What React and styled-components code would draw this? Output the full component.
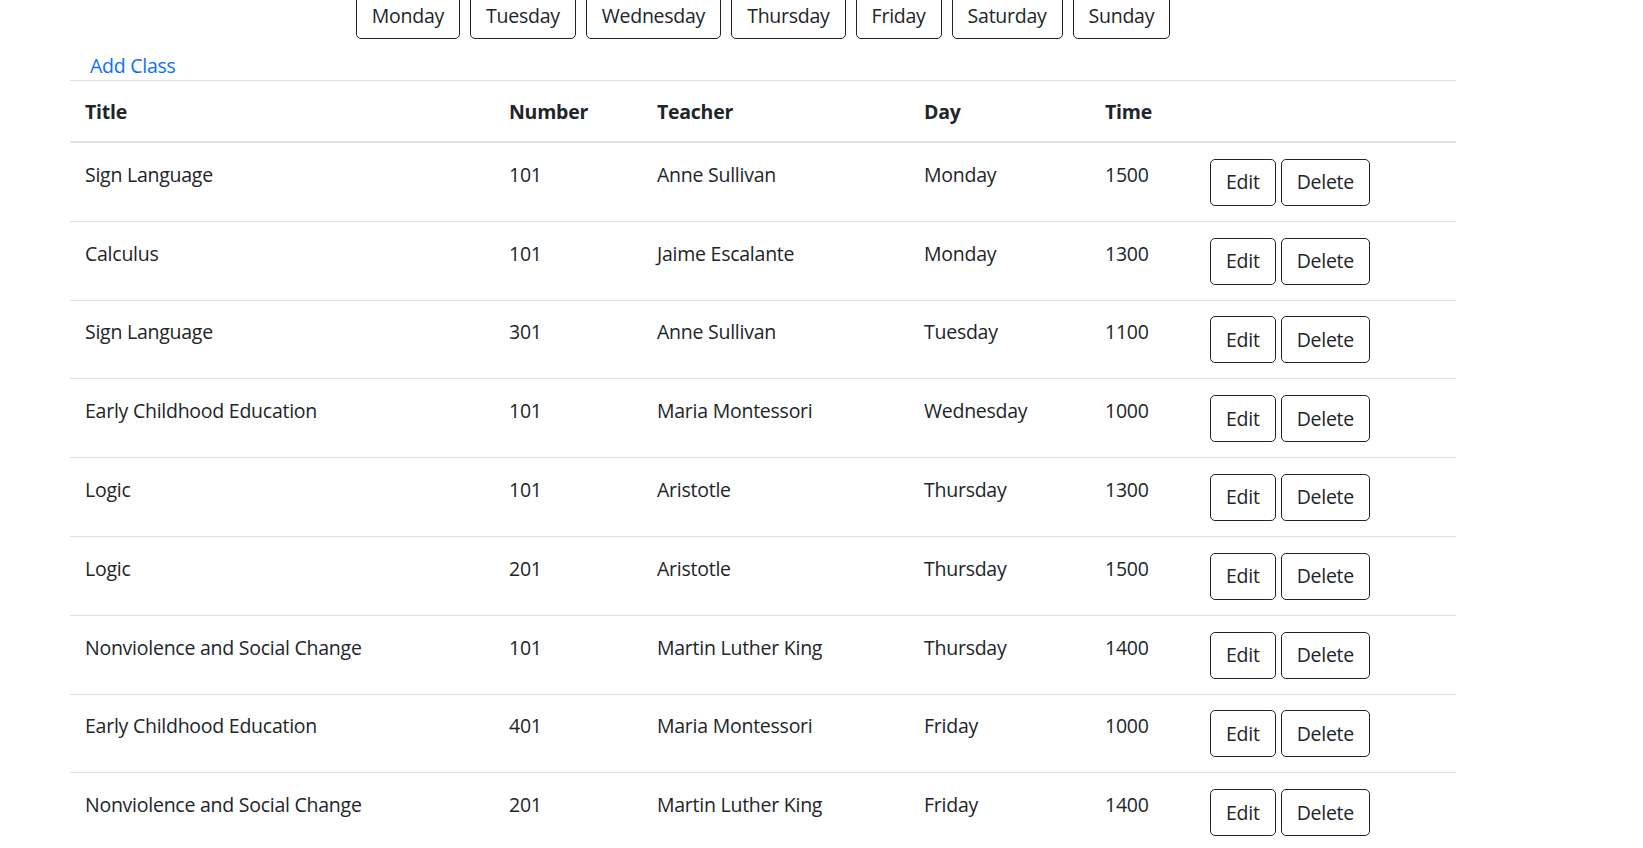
import React from "react";
import styled, { createGlobalStyle } from "styled-components";

const GlobalStyle = createGlobalStyle`
  html {
    font-size: 20px;
    overflow: hidden;
  }
  body {
    margin: 0;
    font-family: "Open Sans", "Noto Sans", sans-serif;
    font-size: 19.5px;
    letter-spacing: -0.25px;
    line-height: 30px;
    color: #212529;
    background: #fff;
    overflow: hidden;
  }
`;

const Container = styled.div`
  width: 1386px;
  margin-left: 70px;
`;

const DayBar = styled.div`
  display: flex;
  justify-content: center;
  gap: 10px;
  margin-top: -8px;
  margin-bottom: 11px;
`;

const Button = styled.button`
  display: inline-block;
  font-family: inherit;
  font-size: 19.5px;
  letter-spacing: -0.25px;
  line-height: 30px;
  color: #212529;
  background: transparent;
  border: 1px solid #212529;
  border-radius: 5px;
  padding: 7.5px 15px;
  cursor: pointer;
`;

const AddLink = styled.a`
  display: block;
  padding-left: 20px;
  padding-top: 1px;
  height: 29px;
  color: #0d6efd;
  text-decoration: none;
`;

const Table = styled.table`
  width: 100%;
  border-collapse: collapse;
  table-layout: fixed;
  border-top: 1px solid #dee2e6;
`;

const HeadRow = styled.tr`
  border-bottom: 2px solid #dee2e6;
`;

const Th = styled.th`
  box-sizing: border-box;
  width: ${props => props.w}px;
  text-align: left;
  font-weight: 700;
  padding: 16px 15px 14px;
  vertical-align: top;
`;

const Row = styled.tr`
  border-bottom: 1px solid #dee2e6;
`;

const Td = styled.td`
  padding: 16.8px 15px 14px;
  vertical-align: top;
  white-space: nowrap;
`;

const ActionCell = styled.td`
  padding: 15.8px 15px 15px;
  vertical-align: top;
`;

const Actions = styled.div`
  display: flex;
  gap: 5px;
`;

const days = [
  "Monday",
  "Tuesday",
  "Wednesday",
  "Thursday",
  "Friday",
  "Saturday",
  "Sunday"
];

const columns = [
  { label: "Title", w: 424 },
  { label: "Number", w: 148 },
  { label: "Teacher", w: 267 },
  { label: "Day", w: 181 },
  { label: "Time", w: 105 },
  { label: "", w: 261 }
];

const classes = [
  ["Sign Language", "101", "Anne Sullivan", "Monday", "1500"],
  ["Calculus", "101", "Jaime Escalante", "Monday", "1300"],
  ["Sign Language", "301", "Anne Sullivan", "Tuesday", "1100"],
  ["Early Childhood Education", "101", "Maria Montessori", "Wednesday", "1000"],
  ["Logic", "101", "Aristotle", "Thursday", "1300"],
  ["Logic", "201", "Aristotle", "Thursday", "1500"],
  ["Nonviolence and Social Change", "101", "Martin Luther King", "Thursday", "1400"],
  ["Early Childhood Education", "401", "Maria Montessori", "Friday", "1000"],
  ["Nonviolence and Social Change", "201", "Martin Luther King", "Friday", "1400"]
];

const App = () => (
  <>
    <GlobalStyle />
    <Container>
      <DayBar>
        {days.map(day => (
          <Button key={day}>{day}</Button>
        ))}
      </DayBar>
      <AddLink href="#">Add Class</AddLink>
      <Table>
        <thead>
          <HeadRow>
            {columns.map((col, i) => (
              <Th key={i} w={col.w}>
                {col.label}
              </Th>
            ))}
          </HeadRow>
        </thead>
        <tbody>
          {classes.map((item, index) => (
            <Row key={index}>
              {item.map((value, i) => (
                <Td key={i}>{value}</Td>
              ))}
              <ActionCell>
                <Actions>
                  <Button>Edit</Button>
                  <Button>Delete</Button>
                </Actions>
              </ActionCell>
            </Row>
          ))}
        </tbody>
      </Table>
    </Container>
  </>
);

export default App;
